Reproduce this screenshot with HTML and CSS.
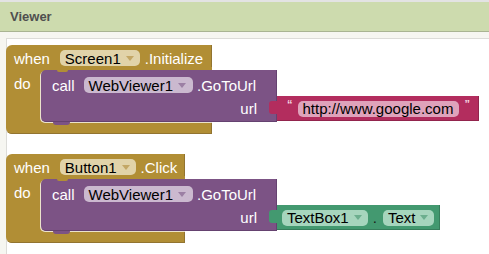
FILE: index.html
```html
<!DOCTYPE html>
<html lang="en">
<head>
  <meta charset="UTF-8">
  <title>Viewer</title>
  <link rel="stylesheet" href="styles.css">
</head>
<body>

  <div class="top-strip"></div>
  <div class="panel-head">Viewer</div>

  <div class="frame">
    <div class="workspace">

      <div class="event w-init">
        <div class="event-head">
          <span class="kw">when</span>
          <span class="drop drop-gold">Screen1<i class="arrow"></i></span>
          <span class="member">.Initialize</span>
        </div>
        <div class="event-body">
          <div class="do-col">do</div>
          <div class="stmt">
            <div class="call">
              <div class="call-row">
                <span class="kw-call">call</span>
                <span class="drop drop-purple">WebViewer1<i class="arrow"></i></span>
                <span class="member">.GoToUrl</span>
              </div>
              <div class="arg-row">url</div>
            </div>
            <div class="value text-block">
              <span class="quote">&ldquo;</span>
              <span class="drop drop-red">http://www.google.com</span>
              <span class="quote">&rdquo;</span>
            </div>
          </div>
        </div>
        <div class="event-foot"></div>
      </div>

      <div class="event w-click">
        <div class="event-head">
          <span class="kw">when</span>
          <span class="drop drop-gold">Button1<i class="arrow"></i></span>
          <span class="member">.Click</span>
        </div>
        <div class="event-body">
          <div class="do-col">do</div>
          <div class="stmt">
            <div class="call">
              <div class="call-row">
                <span class="kw-call">call</span>
                <span class="drop drop-purple">WebViewer1<i class="arrow"></i></span>
                <span class="member">.GoToUrl</span>
              </div>
              <div class="arg-row">url</div>
            </div>
            <div class="value get-block">
              <span class="drop drop-green">TextBox1<i class="arrow"></i></span>
              <span class="dot">.</span>
              <span class="drop drop-green">Text<i class="arrow"></i></span>
            </div>
          </div>
        </div>
        <div class="event-foot"></div>
      </div>

    </div>
  </div>

</body>
</html>
```

FILE: styles.css
```css
body {
  margin: 0;
  font-family: "Liberation Sans", Arial, sans-serif;
  background: #fff;
  overflow: hidden;
}

.top-strip {
  height: 2px;
  background: #e3e3e3;
}

.panel-head {
  height: 29px;
  line-height: 29px;
  padding-left: 10px;
  background: #cddbae;
  border-bottom: 1px solid #a9b492;
  font-weight: bold;
  font-size: 13px;
  color: #4f4f4f;
}

.frame {
  background: #f6f6f1;
  padding: 6px 0 0 6px;
  height: 222px;
  box-sizing: border-box;
}

.workspace {
  background: #fff;
  border-top: 1px solid #dcdcd8;
  border-left: 1px solid #dcdcd8;
  height: 100%;
  padding-top: 6px;
  box-sizing: border-box;
  font-size: 15px;
}

/* event block (gold C shape) */
.event {
  margin: 0 0 20px -1px;
  background: #b18e35;
  border-radius: 6px 0 0 6px;
  color: #fff;
}
.w-init { width: 206px; }
.w-click { width: 179px; }

.event-head {
  height: 22px;
  padding: 4px 0 0 8px;
  box-sizing: border-box;
  display: flex;
  align-items: center;
  box-shadow: inset -1px 0 0 #927430;
}
.kw { margin-right: 10px; }
.member { margin-left: 5px; white-space: nowrap; }

.event-body {
  display: flex;
  padding-top: 3px;
}

.do-col {
  width: 35px;
  flex-shrink: 0;
  padding: 6px 0 0 8px;
  box-sizing: border-box;
  line-height: 16px;
}

.event-foot {
  height: 12px;
  border-radius: 0 0 0 6px;
  box-shadow: inset -1px -1px 0 #927430;
}

.stmt {
  display: flex;
  align-items: flex-end;
  flex-shrink: 0;
}

/* method call block */
.call {
  position: relative;
  width: 236px;
  height: 52px;
  padding: 7px 0 0 11px;
  box-sizing: border-box;
  background: #7c5385;
  border-radius: 5px 0 0 5px;
  box-shadow: -1px 1px 0 rgba(255,255,255,0.75), inset -1px -1px 0 #654270;
}
.call::before {
  content: "";
  position: absolute;
  left: 16px;
  top: 0;
  width: 11px;
  height: 2px;
  background: #b18e35;
  border-radius: 0 0 4px 4px;
}
.call::after {
  content: "";
  position: absolute;
  left: 12px;
  bottom: -3px;
  width: 17px;
  height: 3px;
  background: #7c5385;
  border-radius: 0 0 5px 5px;
}

.call-row {
  display: flex;
  align-items: center;
  height: 16px;
}
.kw-call { margin-right: 9px; }
.call-row .member { margin-left: 4px; }

.arg-row {
  display: flex;
  justify-content: flex-end;
  align-items: center;
  height: 25px;
  margin-top: 3px;
  padding-right: 20px;
}

/* value blocks plugged in on the right */
.value {
  position: relative;
  height: 25px;
  display: flex;
  align-items: center;
  margin-bottom: 1px;
  box-sizing: border-box;
  box-shadow: inset -1px -1px 0 rgba(0,0,0,0.18);
}
.value::before {
  content: "";
  position: absolute;
  left: -8px;
  top: 5px;
  width: 8px;
  height: 13px;
  background: inherit;
  border-radius: 3px 0 0 3px;
}

.text-block {
  width: 202px;
  padding-left: 10px;
  background: #b32d5e;
}
.quote {
  align-self: flex-start;
  margin-top: 3px;
  font-size: 11px;
  font-weight: bold;
  line-height: 11px;
  color: #f3d6e1;
}
.text-block .drop { margin: 0 5px; }

.get-block {
  padding: 0 6px 0 5px;
  background: #439970;
}
.dot {
  color: #1c1c1c;
  margin: 0 6px 0 5px;
}

/* dropdown pills */
.drop {
  display: inline-flex;
  align-items: center;
  height: 16px;
  padding: 0 6px 0 5px;
  border-radius: 5px;
  color: #000;
  white-space: nowrap;
}
.drop-gold { background: #e1d3a9; }
.drop-purple { background: #cbb9cf; padding-right: 7px; }
.drop-red { background: #dfa3bb; }
.drop-green { background: #a6d5bd; }

.arrow {
  width: 0;
  height: 0;
  margin-left: 5px;
  border-left: 4.5px solid transparent;
  border-right: 4.5px solid transparent;
  border-top: 5px solid;
}
.drop-gold .arrow { color: #c3a765; }
.drop-purple .arrow { color: #9c7fa4; }
.drop-green .arrow { color: #6cae8e; }
```
